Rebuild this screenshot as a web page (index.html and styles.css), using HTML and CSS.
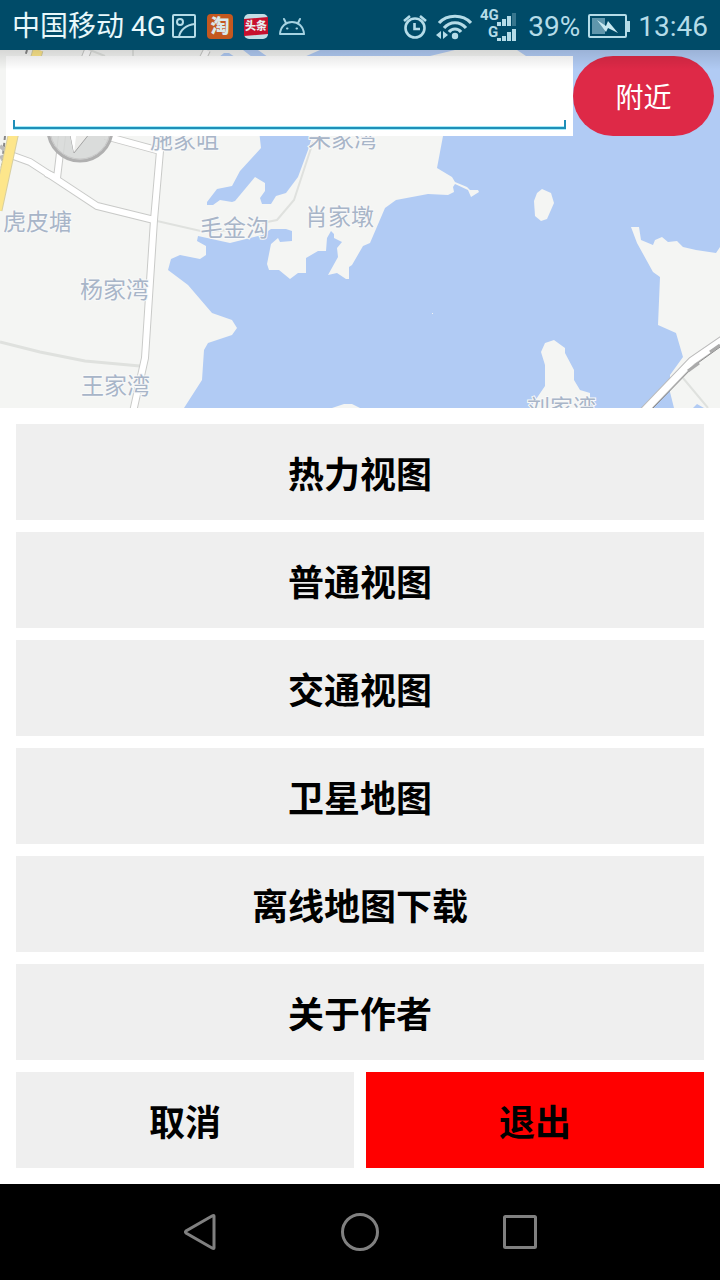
FILE: index.html
```html
<!DOCTYPE html>
<html lang="zh-CN">
<head>
    <meta charset="UTF-8">
    <meta name="viewport" content="width=device-width, initial-scale=1.0">
    <title>地图</title>
    <link rel="stylesheet" href="styles.css">
</head>
<body>
    <header class="status-bar">
        <span class="carrier">中国移动 4G</span>
        <div class="notifications">
            <svg width="26" height="26" viewBox="0 0 26 26" fill="none" stroke="#b5dce8" stroke-width="2">
                <rect x="2" y="1" width="22" height="22" rx="1"/>
                <circle cx="9" cy="8" r="3"/>
                <path d="M8 23C9 16 15 11 24 10"/>
            </svg>
            <svg width="26" height="26" viewBox="0 0 26 26">
                <rect width="26" height="25" rx="4" fill="#c4581f"/>
                <text class="app-name" x="13" y="19" font-size="19" fill="#d9e8ea">淘</text>
            </svg>
            <svg width="26" height="26" viewBox="0 0 26 26">
                <rect x="1" y="0" width="24" height="25" rx="5" fill="#c3dde5"/>
                <path d="M1 5L25 3V20L1 22Z" fill="#c8102e"/>
                <text class="app-name" x="13" y="16" font-size="11" fill="#e6eef0">头条</text>
            </svg>
            <svg width="26" height="26" viewBox="0 0 26 26" fill="none" stroke="#a6d3e2" stroke-width="2" stroke-linecap="round">
                <path d="M1 20C2 4 24 4 25 20Z" stroke-linejoin="round"/>
                <path d="M7 9L5 5M19 9L21 5"/>
                <path d="M8 14.500H8.500M17.500 14.500H18"/>
            </svg>
        </div>
        <div class="indicators">
            <svg width="26" height="26" viewBox="0 0 26 26" fill="none" stroke="#b5dce8" stroke-width="2.600">
                <circle cx="13" cy="14" r="9.500"/>
                <path d="M12.500 9V15H18M2 7L8 2M24 7L18 2"/>
            </svg>
            <svg width="36" height="28" viewBox="0 0 36 28">
                <g fill="none" stroke="#b5dce8" stroke-width="3.200">
                    <path d="M3 10C11 1 27 1 35 10"/>
                    <path d="M8 15C14 8 24 8 30 15"/>
                    <path d="M13 19C16 15 22 15 25 19"/>
                </g>
                <circle cx="19" cy="23" r="3.200" fill="#b5dce8"/>
                <path d="M0 22L5 18V26ZM12 22L7 18V26Z" fill="#b5dce8"/>
            </svg>
            <svg width="36" height="38" viewBox="0 0 36 38" fill="#b5dce8">
                <text class="net" x="0" y="12">4G</text>
                <text class="net" x="8" y="29">G</text>
                <path d="M17 14h4v4h-4zM22 11h4v7h-4zM27 8h4v10h-4zM17 30h4v3h-4zM22 28h4v5h-4zM27 24h4v9h-4zM32 21h4v12h-4z"/>
                <path d="M32 5h4v13h-4z" opacity=".3"/>
            </svg>
            <span class="percent">39%</span>
            <svg width="42" height="26" viewBox="0 0 42 26">
                <rect x="1" y="1" width="37" height="22" rx="1" fill="none" stroke="#b5dce8" stroke-width="2"/>
                <path d="M39 7h3v11h-3z" fill="#b5dce8"/>
                <path d="M4 4h13v16H4z" fill="#5f96ac"/>
                <path d="M9 6L18 12L20 7L30 19L20 14L18 18Z" fill="#c9e9f1"/>
            </svg>
            <time>13:46</time>
        </div>
    </header>

    <main>
        <section class="map">
            <svg class="map-canvas" viewBox="0 50 720 358" preserveAspectRatio="xMidYMin slice">
                <rect x="-1000" y="50" width="2720" height="1000" fill="#b1cbf4"/>

                <!-- land -->
                <g fill="#f4f5f3">
                    <path d="M0 50H517L526 56V60H443V136L437 168L452 177L455 182L467 187L470 190L478 190L479 192L471 197L468 190L455 184L453 187L454 192L448 195L428 194L396 200L385 208L370 243L363 246L352 265L349 267V279H346L337 273L328 275L338 257L337 248L342 242L334 238V234L331 231L327 238L326 251L318 251L306 258V273L298 273L290 279L279 270L269 270L267 264L271 244L278 238L280 242L292 241V231L286 229H271L262 235L230 243L198 236L197 241L206 246V255L200 259L180 255L171 259L168 270L188 285L212 313L232 320L237 328L232 335L208 343L204 350L202 380L184 408H0Z"/>
                    <path d="M631 227H639L641 240L653 245L655 240L662 237L668 242L677 241L683 247L696 250L716 253L720 247V408H674L670 392V375L683 357L676 333L658 325L660 277L653 272L637 243Z"/>
                    <path d="M542 189L551 193L554 203L547 219L541 221L535 216L534 201L537 193Z"/>
                    <path d="M554 340L565 348V353L574 370V380L580 390L590 393V408H530L545 386V365L541 352L545 343Z"/>
                    <path d="M332 408L344 404H352L360 408Z"/>
                    <rect x="432" y="313" width="1" height="1"/>
                </g>

                <!-- ponds and channels -->
                <g fill="#b1cbf4">
                    <path d="M259 130L261 148L240 171L232 186L217 189L207 202V205H213L220 200L232 202L235 201L255 177L265 183V191L260 198L262 204H271L276 196L286 193L298 177L308 150L314 130Z"/>
                    <path d="M219 57L224 53H229L235 57ZM243 50H258L268 57H252ZM320 50L304 57H426L455 50Z"/>
                    <path d="M693 408L697 404L704 408Z"/>
                </g>

                <!-- small lanes -->
                <g fill="none" stroke="#dfe1de" stroke-width="3">
                    <path d="M0 342L40 352L85 361L140 366"/>
                    <path d="M157 221L205 232L230 230M313 142L294 200L277 220L262 223" stroke-width="2"/>
                    <path d="M683 378L708 408M90 50L105 56M133 50V57" stroke-width="2"/>
                </g>

                <!-- roads -->
                <g fill="none" stroke="#c9cac8" stroke-width="8">
                    <path d="M88 50L84 60M207 50L202 60M62 136L57 178L46 173"/>
                    <path d="M8 154L30 162L50 175L97 206L154 220M105 136L160 151L154 220L145 358L133 412"/>
                </g>
                <g fill="none" stroke="#fff" stroke-width="6">
                    <path d="M88 50L84 60M207 50L202 60M62 136L57 178L46 173"/>
                    <path d="M8 154L30 162L50 175L97 206L154 220M105 136L160 151L154 220L145 358L133 412"/>
                </g>
                <path d="M643 412L692 361L724 339" fill="none" stroke="#bbb" stroke-width="9"/>
                <path d="M643 412L692 361L724 339" fill="none" stroke="#fff" stroke-width="7"/>
                <path d="M653 408L695 365L720 347" fill="none" stroke="#888"/>
                <path d="M688 371L699 363M710 352L720 345" stroke="#aaa" stroke-width="3"/>
                <path d="M27 50L25 57M5 136L1 175" stroke="#888" stroke-width="2" stroke-dasharray="4 3"/>
                <path d="M0 146L5 150M0 158L5 156" stroke="#bbb" stroke-width="4"/>
                <path d="M38 50L13 136L-3 210" fill="none" stroke="#d8cf9f" stroke-width="11"/>
                <path d="M38 50L13 136L-3 210" fill="none" stroke="#fde68b" stroke-width="9"/>

                <g class="place">
                    <text x="150" y="148">施家咀</text>
                    <text x="308" y="147">朱家湾</text>
                    <text x="3" y="230">虎皮塘</text>
                    <text x="200" y="236">毛金沟</text>
                    <text x="305" y="225">肖家墩</text>
                    <text x="80" y="298">杨家湾</text>
                    <text x="81" y="394">王家湾</text>
                    <text x="527" y="416">刘家湾</text>
                </g>

                <!-- compass -->
                <circle cx="80" cy="129" r="32" fill="#d5d7d6" fill-opacity=".85" stroke="#b0b0b0" stroke-width="3"/>
                <circle cx="80" cy="129" r="30" fill="none" stroke="#c8c8c8"/>
                <path d="M69 128L74 153L94 128Z" fill="#ececea" stroke="#a2a2a2"/>
                <path d="M74 153L77 128H69Z" fill="#fff"/>
            </svg>

            <form class="search">
                <div class="search-box">
                    <input type="text" class="search-input" aria-label="搜索">
                </div>
                <button type="button" class="nearby">附近</button>
            </form>
        </section>

        <section class="menu">
            <button class="item">热力视图</button>
            <button class="item">普通视图</button>
            <button class="item">交通视图</button>
            <button class="item">卫星地图</button>
            <button class="item">离线地图下载</button>
            <button class="item">关于作者</button>
            <div class="row">
                <button class="item">取消</button>
                <button class="item exit">退出</button>
            </div>
        </section>
    </main>

    <nav class="nav-bar">
        <button class="nav-button" aria-label="返回">
            <svg width="40" height="40" viewBox="0 0 40 40"><path d="M34 4V36Q34 37 32 36L6 21Q5 20 6 19L32 4Q34 3 34 4Z"/></svg>
        </button>
        <button class="nav-button" aria-label="主页">
            <svg width="40" height="40" viewBox="0 0 40 40"><circle cx="20" cy="20" r="17.500"/></svg>
        </button>
        <button class="nav-button" aria-label="最近任务">
            <svg width="40" height="40" viewBox="0 0 40 40"><rect x="4.500" y="4.500" width="31" height="31" rx="1"/></svg>
        </button>
    </nav>
</body>
</html>
```

FILE: styles.css
```css
body {
    margin: 0;
    min-height: 100vh;
    display: flex;
    flex-direction: column;
    background: #fff;
    font-family: Roboto, 'Noto Sans CJK SC', sans-serif;
}
main {
    flex: 1;
}
button {
    border: none;
    padding: 0;
    font-family: inherit;
    cursor: pointer;
}
svg {
    display: block;
}

/* status bar */
.status-bar {
    display: flex;
    align-items: center;
    height: 47px;
    padding: 3px 12px 0;
    background: #004b68;
    color: #b5dce8;
    font-size: 28px;
    line-height: 48px;
    white-space: nowrap;
}
.carrier {
    color: #e8f8fb;
}
.notifications {
    display: flex;
    gap: 10px;
    margin-left: 5px;
}
.indicators {
    display: flex;
    align-items: center;
    gap: 8px;
    margin-left: auto;
}
.percent {
    margin-left: 4px;
}
.app-name {
    font-family: 'Noto Sans CJK SC', sans-serif;
    font-weight: 900;
    text-anchor: middle;
}
.net {
    font-size: 15px;
    font-weight: 700;
}

/* map */
.map {
    position: relative;
    height: 358px;
    overflow: hidden;
}
.map::after {
    content: '';
    position: absolute;
    top: 0;
    left: 0;
    right: 0;
    height: 20px;
    background: linear-gradient(rgba(0, 0, 0, 0.12), rgba(0, 0, 0, 0));
    pointer-events: none;
}
.map-canvas {
    position: absolute;
    width: 100%;
    height: 100%;
}
.place {
    font-family: 'Noto Sans CJK SC', sans-serif;
    font-size: 23px;
    fill: #a8b5c8;
    stroke: #f8f9f9;
    stroke-width: 2px;
    paint-order: stroke;
}
.search {
    position: relative;
    display: flex;
    padding: 6px;
}
.search-box {
    flex: 1;
    height: 80px;
    padding: 0 7px 7px;
    box-sizing: border-box;
    background: #fff;
}
.search-input {
    width: 100%;
    height: 73px;
    padding: 0 12px;
    box-sizing: border-box;
    border: none;
    outline: none;
    background:
        linear-gradient(#1f8fb8, #1f8fb8) left bottom / 2px 9px no-repeat,
        linear-gradient(#1f8fb8, #1f8fb8) right bottom / 2px 9px no-repeat,
        linear-gradient(#1f8fb8, #1f8fb8) left bottom / 100% 2px no-repeat,
        linear-gradient(#a5ecf8, #a5ecf8) left bottom / 100% 3px no-repeat;
    font-size: 28px;
    box-shadow: 0 1px 0 #a5ecf8;
}
.nearby {
    width: 141px;
    height: 80px;
    border-radius: 40px;
    background: #de2947;
    color: #fff;
    font-size: 28px;
}

/* menu */
.menu {
    display: flex;
    flex-direction: column;
    gap: 12px;
    padding: 16px;
}
.item {
    flex: 1;
    min-height: 96px;
    background: #efefef;
    color: #000;
    font-size: 36px;
    font-weight: 700;
}
.row {
    display: flex;
    gap: 12px;
}
.exit {
    background: #f00;
}

/* navigation bar */
.nav-bar {
    display: flex;
    justify-content: center;
    height: 96px;
    background: #000;
}
.nav-button {
    display: flex;
    align-items: center;
    justify-content: center;
    width: 160px;
    background: none;
}
.nav-button svg {
    fill: none;
    stroke: #808080;
    stroke-width: 3px;
}
```
